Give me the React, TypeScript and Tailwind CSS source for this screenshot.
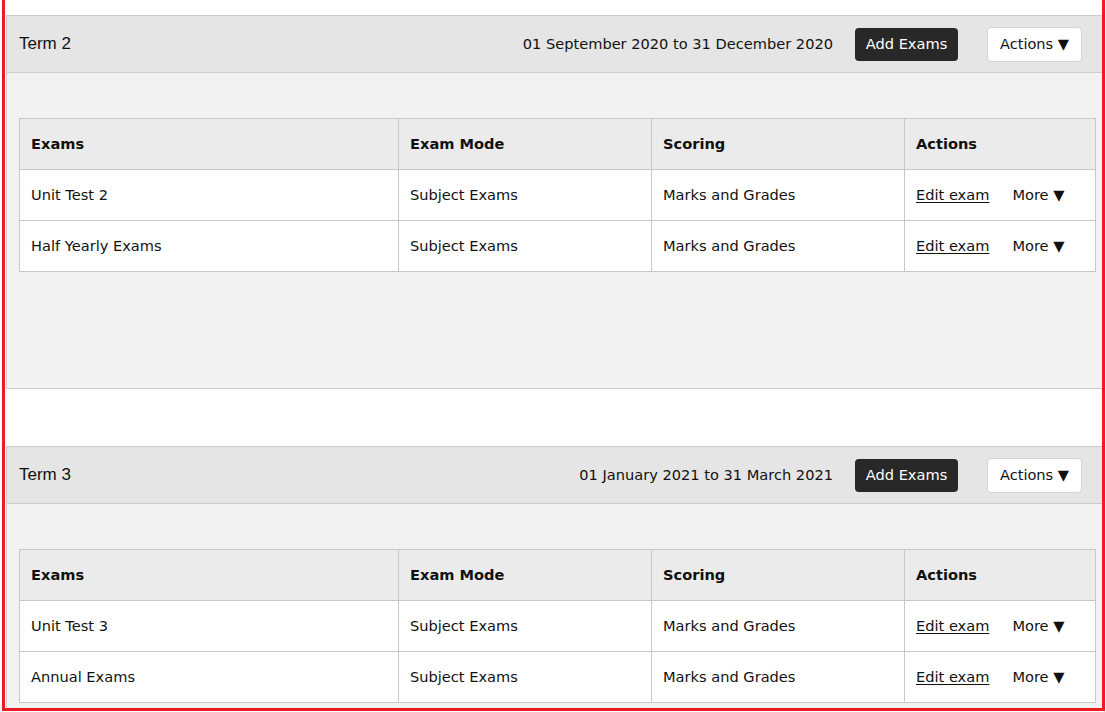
type Exam = {
  name: string;
  mode: string;
  scoring: string;
};

type Term = {
  title: string;
  range: string;
  exams: Exam[];
};

const terms: Term[] = [
  {
    title: "Term 2",
    range: "01 September 2020 to 31 December 2020",
    exams: [
      { name: "Unit Test 2", mode: "Subject Exams", scoring: "Marks and Grades" },
      { name: "Half Yearly Exams", mode: "Subject Exams", scoring: "Marks and Grades" },
    ],
  },
  {
    title: "Term 3",
    range: "01 January 2021 to 31 March 2021",
    exams: [
      { name: "Unit Test 3", mode: "Subject Exams", scoring: "Marks and Grades" },
      { name: "Annual Exams", mode: "Subject Exams", scoring: "Marks and Grades" },
    ],
  },
];

const cell = "h-[51px] border border-[#c8c8c8] px-[11px] text-left align-middle";

function TermSection({ term }: { term: Term }) {
  return (
    <section className="ml-px w-[1102px] border border-[#cccccc]">
      <div className="flex h-[57px] items-center border-b border-[#cccccc] bg-[#e5e5e5] pl-3 pr-[25px]">
        <h2 className="font-['Liberation_Sans',Arial,sans-serif] text-[17px] text-[#111]">{term.title}</h2>
        <span className="ml-auto text-[14.6px] text-[#111]">{term.range}</span>
        <button className="ml-[22px] flex h-[33px] w-[103px] items-center justify-center rounded-[4px] bg-[#282828] text-[14.6px] text-white">
          Add Exams
        </button>
        <button className="ml-[29px] flex h-[35px] w-[95px] items-center justify-center rounded-[4px] border border-[#d4d4d4] bg-white text-[14.6px] text-[#111]">
          Actions ▼
        </button>
      </div>
      <div className="bg-[#f2f2f2] px-3 pt-[45px] pb-[116px]">
        <table className="w-[1076px] table-fixed border-collapse text-[14.6px] text-[#111]">
          <colgroup>
            <col className="w-[379px]" />
            <col className="w-[253px]" />
            <col className="w-[253px]" />
            <col className="w-[191px]" />
          </colgroup>
          <thead className="bg-[#ebebeb]">
            <tr>
              <th className={`${cell} font-bold`}>Exams</th>
              <th className={`${cell} font-bold`}>Exam Mode</th>
              <th className={`${cell} font-bold`}>Scoring</th>
              <th className={`${cell} font-bold`}>Actions</th>
            </tr>
          </thead>
          <tbody className="bg-white">
            {term.exams.map((exam) => (
              <tr key={exam.name}>
                <td className={cell}>{exam.name}</td>
                <td className={cell}>{exam.mode}</td>
                <td className={cell}>{exam.scoring}</td>
                <td className={cell}>
                  <a href="#" className="underline underline-offset-2">Edit exam</a>
                  <span className="ml-[23px]">More ▼</span>
                </td>
              </tr>
            ))}
          </tbody>
        </table>
      </div>
    </section>
  );
}

export default function App() {
  return (
    <div className="h-[712px] overflow-hidden bg-white pb-px pl-[2px] pr-px font-['DejaVu_Sans',Verdana,sans-serif]">
      <div className="h-full overflow-hidden border-x-[3px] border-b-[3px] border-[#ed1c24] pt-[15px]">
        <div className="flex flex-col gap-[57px]">
          {terms.map((t) => (
            <TermSection key={t.title} term={t} />
          ))}
        </div>
      </div>
    </div>
  );
}
